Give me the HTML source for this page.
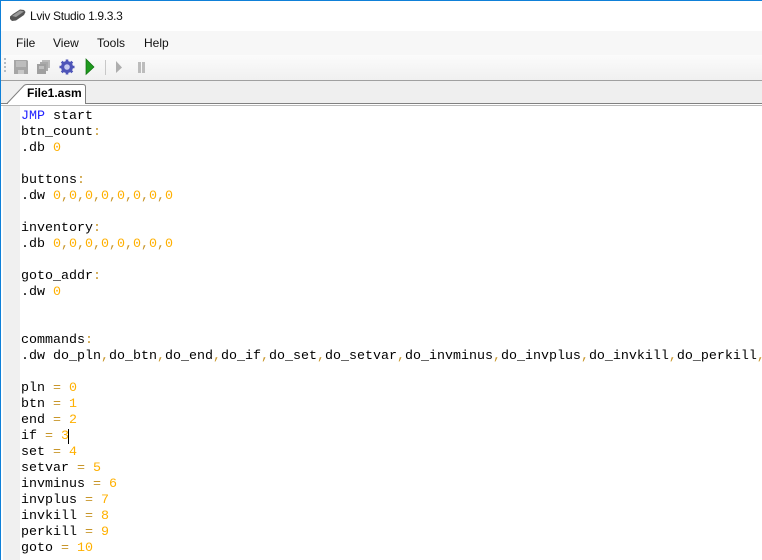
<!DOCTYPE html>
<html><head><meta charset="utf-8"><style>
html,body{margin:0;padding:0;width:762px;height:560px;overflow:hidden;background:#fff}
#a{position:absolute;left:0;top:0;width:762px;height:560px;overflow:hidden;font-family:"Liberation Sans",sans-serif;color:#111}
.r{position:absolute}
.t{position:absolute;font-size:12px;line-height:16px;white-space:nowrap}
#code{position:absolute;left:21px;top:109px;margin:0;font:13.33px/16px "Liberation Mono",monospace;color:#000;white-space:pre;width:741px;overflow:hidden}
#code .k{color:#2222ff}#code .n{color:#ffb000}#code .o{color:#c8962a}
</style></head><body><div id="a">
<div class="r" style="left:0;top:31px;width:762px;height:24px;background:#f7f7f7"></div>
<div class="r" style="left:0;top:55px;width:762px;height:25px;background:linear-gradient(#fbfbfb,#f0f0f0)"></div>
<div class="r" style="left:0;top:80px;width:762px;height:1px;background:#a0a0a0"></div>
<div class="r" style="left:0;top:81px;width:762px;height:22px;background:#efefef"></div>
<div class="r" style="left:0;top:103px;width:762px;height:1px;background:#808080"></div>
<div class="r" style="left:0;top:104px;width:762px;height:1px;background:#fff"></div>
<div class="r" style="left:0;top:105px;width:762px;height:1px;background:#b8b8b8"></div>
<div class="r" style="left:3px;top:106px;width:17px;height:454px;background:#f0f0f0"></div>
<div class="r" style="left:0;top:0;width:762px;height:1px;background:#0f80d8"></div>
<div class="r" style="left:0;top:0;width:1px;height:560px;background:#0f80d8"></div>
<svg class="r" style="left:9px;top:8px" width="18" height="14" viewBox="0 0 18 14"><path d="M1 8.500L4 6L11 1.500L15 2L16.500 4L15 7L7 12.500L3 13L1 11Z" fill="#555"/><path d="M3 8L11 2.500L15 3.500L7 9Z" fill="#999"/></svg>
<div class="t" style="left:30px;top:8px;letter-spacing:-.33px">Lviv Studio 1.9.3.3</div>
<div class="t" style="left:16px;top:35px">File</div>
<div class="t" style="left:53px;top:35px">View</div>
<div class="t" style="left:97px;top:35px">Tools</div>
<div class="t" style="left:144px;top:35px">Help</div>
<svg class="r" style="left:0;top:55px" width="160" height="25" viewBox="0 0 160 25">
<g fill="#b4bcc4"><rect x="4" y="3" width="2" height="2"/><rect x="4" y="7" width="2" height="2"/><rect x="4" y="11" width="2" height="2"/><rect x="4" y="15" width="2" height="2"/></g>
<path d="M14 5h13l1 1v13H14z" fill="#a6a6a6"/><rect x="16" y="6" width="10" height="6" fill="#bdbdbd"/><rect x="18" y="15" width="6" height="4" fill="#c8c8c8"/>
<path d="M42 5h8v8h-8z" fill="#bbb"/><path d="M40 7h8v9h-8z" fill="#aaa"/><path d="M37 9h9v10h-9z" fill="#a0a0a0"/><rect x="39" y="11" width="5" height="3" fill="#c0c0c0"/>
<circle cx="67" cy="12" r="6" fill="#4e55b8"/><g stroke="#4e55b8" stroke-width="2.6"><path d="M67 4.500v15M59.500 12h15M61.700 6.700l10.600 10.600M72.300 6.700L61.700 17.300"/></g><circle cx="67" cy="12" r="2.800" fill="#c8ccf0"/>
<path d="M86 4L94 12L86 19.500Z" fill="#1f9a1f" stroke="#0c6e0c" stroke-width=".7"/>
<rect x="105" y="5" width="1" height="15" fill="#c8c8c8"/>
<path d="M116 6L122 12.500L116 18Z" fill="#aeaeae"/>
<rect x="138" y="7" width="3" height="11" fill="#bcbcbc"/><rect x="142" y="7" width="3" height="11" fill="#bcbcbc"/>
</svg>
<svg class="r" style="left:0;top:84px" width="90" height="21" viewBox="0 0 90 21"><path d="M7 19.500L24 1.500Q25 .5 27 .5H83Q85.500 .5 85.500 3V19.500" fill="#fff" stroke="#808080"/><rect x="8" y="19" width="77" height="2" fill="#fff"/></svg>
<div class="t" style="left:27px;top:85px;font-weight:bold;color:#000">File1.asm</div>
<pre id="code"><span class="k">JMP</span> start
btn_count<span class="o">:</span>
.db <span class="n">0</span>

buttons<span class="o">:</span>
.dw <span class="n">0</span><span class="o">,</span><span class="n">0</span><span class="o">,</span><span class="n">0</span><span class="o">,</span><span class="n">0</span><span class="o">,</span><span class="n">0</span><span class="o">,</span><span class="n">0</span><span class="o">,</span><span class="n">0</span><span class="o">,</span><span class="n">0</span>

inventory<span class="o">:</span>
.db <span class="n">0</span><span class="o">,</span><span class="n">0</span><span class="o">,</span><span class="n">0</span><span class="o">,</span><span class="n">0</span><span class="o">,</span><span class="n">0</span><span class="o">,</span><span class="n">0</span><span class="o">,</span><span class="n">0</span><span class="o">,</span><span class="n">0</span>

goto_addr<span class="o">:</span>
.dw <span class="n">0</span>


commands<span class="o">:</span>
.dw do_pln<span class="o">,</span>do_btn<span class="o">,</span>do_end<span class="o">,</span>do_if<span class="o">,</span>do_set<span class="o">,</span>do_setvar<span class="o">,</span>do_invminus<span class="o">,</span>do_invplus<span class="o">,</span>do_invkill<span class="o">,</span>do_perkill<span class="o">,</span>

pln <span class="o">=</span> <span class="n">0</span>
btn <span class="o">=</span> <span class="n">1</span>
end <span class="o">=</span> <span class="n">2</span>
if <span class="o">=</span> <span class="n">3</span>
set <span class="o">=</span> <span class="n">4</span>
setvar <span class="o">=</span> <span class="n">5</span>
invminus <span class="o">=</span> <span class="n">6</span>
invplus <span class="o">=</span> <span class="n">7</span>
invkill <span class="o">=</span> <span class="n">8</span>
perkill <span class="o">=</span> <span class="n">9</span>
goto <span class="o">=</span> <span class="n">10</span></pre>
<div class="r" style="left:68px;top:429px;width:1px;height:15px;background:#000"></div>
</div></body></html>
